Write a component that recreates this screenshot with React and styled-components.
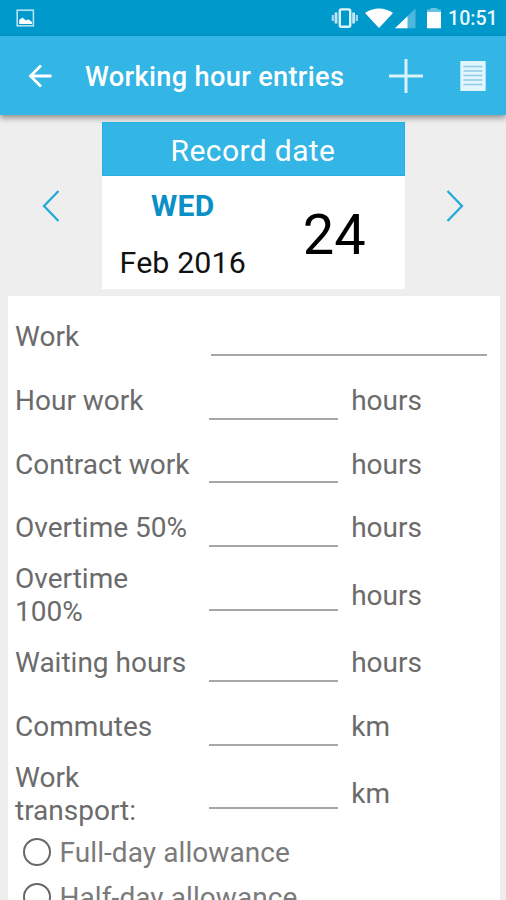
import React from "react";
import styled, { createGlobalStyle } from "styled-components";

const GlobalStyle = createGlobalStyle`
  * {
    box-sizing: border-box;
  }

  body {
    margin: 0;
    background: #eeeeee;
    font-family: Roboto, sans-serif;
    overflow: hidden;
  }
`;

const Screen = styled.div`
  width: 506px;
  height: 900px;
  overflow: hidden;
  background: #eeeeee;
`;

const StatusBar = styled.div`
  display: flex;
  align-items: center;
  height: 36px;
  padding: 0 9px 0 16px;
  background: #0099cc;
  color: #e8f7fc;
`;
const StatusIcons = styled.div`
  display: flex;
  margin-left: auto;
`;
const StatusGap = styled.span`
  width: ${props => props.width}px;
`;
const Clock = styled.div`
  width: 49px;
  margin-left: 7px;
  font-size: 19.6px;
  font-weight: 500;
  line-height: 36px;
  padding-top: 2px;
  white-space: nowrap;
`;

const AppBar = styled.header`
  display: flex;
  align-items: center;
  height: 79px;
  padding: 0 20px 0 28px;
  background: #33b5e5;
  box-shadow: 0 3px 6px rgba(0, 0, 0, 0.4);
  color: white;
`;
const Title = styled.h1`
  margin: 2px auto 0 33px;
  font-size: 27.2px;
  font-weight: 500;
  letter-spacing: 0.32px;
  line-height: 32px;
  white-space: nowrap;
`;
const IconButton = styled.button`
  display: flex;
  padding: 0;
  margin-left: ${props => props.gap || 0}px;
  border: 0;
  background: none;
  color: ${props => props.color || "white"};
`;

const DatePicker = styled.section`
  display: flex;
  align-items: center;
  justify-content: space-between;
  height: 167px;
  margin-top: 7px;
  padding: 0 41px;
`;
const DateCard = styled.div`
  width: 303px;
  height: 167px;
  background: white;
`;
const DateHeader = styled.div`
  height: 54px;
  border: 1px solid #27aee1;
  background: #33b5e5;
  color: white;
  font-size: 30px;
  letter-spacing: 0.4px;
  line-height: 56px;
  text-align: center;
`;
const DateBody = styled.div`
  display: flex;
  height: 113px;
`;
const MonthColumn = styled.div`
  width: 163px;
  text-align: center;
`;
const WeekDay = styled.div`
  color: #0b8fc6;
  font-size: 30px;
  font-weight: 700;
  letter-spacing: 0.3px;
  line-height: 60px;
`;
const Month = styled.div`
  color: #111;
  font-size: 30.4px;
  letter-spacing: 0.1px;
  line-height: 53px;
`;
const Day = styled.div`
  width: 141px;
  color: #000;
  font-size: 56px;
  line-height: 119px;
  text-align: center;
`;

const Form = styled.form`
  height: 640px;
  margin: 7px 6.5px 0 7.5px;
  padding: 9px 12.5px 0 7.5px;
  background: white;
  color: #6b6b6b;
  font-size: 28px;
  line-height: 33px;
`;
const Row = styled.div`
  display: flex;
  height: ${props => (props.tall ? 71.2 : 63.7)}px;
`;
const Label = styled.label`
  display: flex;
  align-items: center;
  width: 193.7px;
  padding-right: 16px;
`;
const Input = styled.input`
  width: ${props => (props.wide ? 276 : 129.5)}px;
  height: 51px;
  margin-left: ${props => (props.wide ? 2.5 : 0)}px;
  padding: 0;
  border: 0;
  border-bottom: 2px solid #a6a6a6;
  background: none;
  outline: 0;
  color: #222;
  font: inherit;
`;
const Unit = styled.span`
  display: flex;
  align-items: center;
  margin-left: 13px;
`;
const Option = styled.label`
  display: flex;
  align-items: center;
  height: 45px;
  padding-left: 7.5px;
  color: #7a7a7a;
  font-size: 28px;
  letter-spacing: 0.08px;
`;
const Radio = styled.span`
  width: 28.5px;
  height: 28.5px;
  margin-right: 8.5px;
  border: 2.5px solid #686868;
  border-radius: 50%;
`;

const PictureIcon = () => (
  <svg width="19" height="18" viewBox="0 0 19 18">
    <rect x="1.2" y="1.2" width="16.2" height="15.6" fill="none" stroke="#b5e2f3" strokeWidth="1.6" />
    <path d="M3.2 15V11l3.2-2.5 3.5 3 2.5-1.2 3.6 2.7v2z" fill="white" />
  </svg>
);

const VibrateIcon = () => (
  <svg width="28" height="22" viewBox="0 0 28 22">
    <rect x="8.8" y="2.4" width="10.4" height="17.4" rx="1.5" fill="none" stroke="#e0f4fb" strokeWidth="2.4" />
    <path d="M5 5.5v11M22.6 5.5v11" stroke="#c2e6f4" strokeWidth="2.8" />
    <path d="M1.8 8v6M25.8 8v6" stroke="#a5daef" strokeWidth="2.2" />
  </svg>
);

const WifiIcon = () => (
  <svg width="28" height="22" viewBox="0 0 28 22">
    <path d="M0 6C8 0 20 0 28 6L14 21z" fill="white" />
  </svg>
);

const SignalIcon = () => (
  <svg width="21" height="22" viewBox="0 0 21 22">
    <path d="M20.5 1.5v19.8H0z" fill="#4db8dc" />
    <path d="M12.5 9.2v12.1H0z" fill="white" />
  </svg>
);

const BatteryIcon = () => (
  <svg width="14" height="22" viewBox="0 0 14 22">
    <path d="M3.5 1h7v1.5H14v3H0v-3h3.5z" fill="#66c2e0" />
    <rect y="5" width="14" height="16.3" fill="white" />
  </svg>
);

const BackIcon = () => (
  <svg width="24" height="24" viewBox="0 0 24 24">
    <path d="M13 1.5L2.5 12 13 22.5M2.5 12H23.5" fill="none" stroke="currentColor" strokeWidth="2.8" />
  </svg>
);

const PlusIcon = () => (
  <svg width="34" height="34" viewBox="0 0 34 34">
    <path d="M17 0v34M0 17h34" stroke="#d9f2fc" strokeWidth="3" />
  </svg>
);

const ListIcon = () => (
  <svg width="26" height="32" viewBox="0 0 26 32">
    <rect x="0.3" y="1" width="25.4" height="30" fill="#e0f5fd" />
    <path d="M3.5 6.5h19M3.5 11h19M3.5 15.5h19M3.5 20h19M3.5 24.5h19" stroke="#8ccbe2" strokeWidth="1.7" />
  </svg>
);

const Chevron = ({ right }) => (
  <svg width="20" height="34" viewBox="0 0 20 34">
    <path
      d={right ? "M2.5 2L17 17 2.5 32" : "M17.5 2L3 17 17.5 32"}
      fill="none"
      stroke="currentColor"
      strokeWidth="2.3"
    />
  </svg>
);

const fields = [
  { label: "Work", wide: true },
  { label: "Hour work", unit: "hours" },
  { label: "Contract work", unit: "hours" },
  { label: "Overtime 50%", unit: "hours" },
  { label: "Overtime 100%", unit: "hours", tall: true },
  { label: "Waiting hours", unit: "hours" },
  { label: "Commutes", unit: "km" },
  { label: "Work transport:", unit: "km", tall: true }
];

const allowances = ["Full-day allowance", "Half-day allowance"];

const App = () => (
  <Screen>
    <GlobalStyle />
    <StatusBar>
      <PictureIcon />
      <StatusIcons>
        <VibrateIcon />
        <StatusGap width={6} />
        <WifiIcon />
        <StatusGap width={2} />
        <SignalIcon />
        <StatusGap width={11} />
        <BatteryIcon />
      </StatusIcons>
      <Clock>10:51</Clock>
    </StatusBar>
    <AppBar>
      <IconButton aria-label="Back">
        <BackIcon />
      </IconButton>
      <Title>Working hour entries</Title>
      <IconButton aria-label="Add entry">
        <PlusIcon />
      </IconButton>
      <IconButton aria-label="Entries" gap={37}>
        <ListIcon />
      </IconButton>
    </AppBar>
    <DatePicker>
      <IconButton aria-label="Previous day" color="#22a9d8">
        <Chevron />
      </IconButton>
      <DateCard>
        <DateHeader>Record date</DateHeader>
        <DateBody>
          <MonthColumn>
            <WeekDay>WED</WeekDay>
            <Month>Feb 2016</Month>
          </MonthColumn>
          <Day>24</Day>
        </DateBody>
      </DateCard>
      <IconButton aria-label="Next day" color="#22a9d8">
        <Chevron right />
      </IconButton>
    </DatePicker>
    <Form>
      {fields.map(({ label, unit, wide, tall }) => (
        <Row key={label} tall={tall}>
          <Label>{label}</Label>
          <Input wide={wide} />
          {unit && <Unit>{unit}</Unit>}
        </Row>
      ))}
      {allowances.map(name => (
        <Option key={name}>
          <Radio />
          {name}
        </Option>
      ))}
    </Form>
  </Screen>
);

export default App;
